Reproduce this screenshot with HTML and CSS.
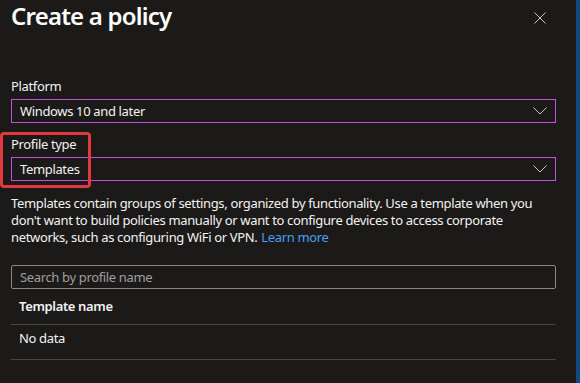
FILE: index.html
```html
<!DOCTYPE html>
<html lang="en">
<head>
    <meta charset="UTF-8">
    <meta name="viewport" content="width=device-width, initial-scale=1.0">
    <title>Create a policy</title>
    <link rel="stylesheet" href="styles.css">
</head>
<body>
    <div class="blade">
        <section class="panel">
            <header class="panel_header">
                <h2>Create a policy</h2>
                <button class="close" aria-label="Close">
                    <svg width="12" height="12" viewBox="0 0 12 12"><path d="M0.5 0.5L11.5 11.5M11.5 0.5L0.5 11.5" stroke="#c8c6c4" stroke-width="1" fill="none"/></svg>
                </button>
            </header>

            <div class="field" id="platform">
                <label>Platform</label>
                <div class="dropdown">
                    <span>Windows 10 and later</span>
                    <svg class="chevron" width="14" height="8" viewBox="0 0 14 8"><path d="M0.5 0.5L7 7L13.5 0.5" stroke="#c8c6c4" stroke-width="1" fill="none"/></svg>
                </div>
            </div>

            <div class="field" id="profile_type">
                <div class="highlight"></div>
                <label>Profile type</label>
                <div class="dropdown">
                    <span>Templates</span>
                    <svg class="chevron" width="14" height="8" viewBox="0 0 14 8"><path d="M0.5 0.5L7 7L13.5 0.5" stroke="#c8c6c4" stroke-width="1" fill="none"/></svg>
                </div>
            </div>

            <p class="description">Templates contain groups of settings, organized by functionality. Use a template when you don't want to build policies manually or want to configure devices to access corporate networks, such as configuring WiFi or VPN.<a href="#">Learn more</a></p>

            <input class="search" type="text" placeholder="Search by profile name">

            <table class="templates">
                <thead>
                    <tr><th>Template name</th></tr>
                </thead>
                <tbody>
                    <tr><td>No data</td></tr>
                </tbody>
            </table>
        </section>
        <div class="edge"></div>
    </div>
</body>
</html>
```

FILE: styles.css
```css
body {
    margin: 0;
    padding: 0;
    background-color: #1b1a19;
    color: #f3f2f1;
    font-family: "Noto Sans", "Open Sans", sans-serif;
    font-size: 13px;
    letter-spacing: -0.35px;
    line-height: 18px;
    overflow: hidden;
}
.blade {
    display: flex;
    height: 383px;
}
.panel {
    width: 545px;
    padding: 0 20px 0 11px;
}
.edge {
    width: 4px;
    background-color: #0e4a7f;
}
.panel_header {
    display: flex;
    justify-content: space-between;
    align-items: flex-start;
    margin-bottom: 45px;
}
.panel_header h2 {
    margin: 0;
    color: #fff;
    font-size: 24px;
    font-weight: 600;
    letter-spacing: -0.8px;
    line-height: 32px;
}
.close {
    background: none;
    border: none;
    padding: 0;
    margin: 12px 10px 0 0;
    width: 12px;
    height: 12px;
    display: flex;
}
.field {
    position: relative;
    margin-bottom: 12px;
}
.field label {
    display: block;
    margin-bottom: 4px;
}
.dropdown {
    display: flex;
    align-items: center;
    justify-content: space-between;
    height: 22px;
    line-height: 22px;
    border: 1px solid #c74fe0;
    padding: 0 8px 0 8px;
}
.highlight {
    position: absolute;
    left: -11px;
    top: -3px;
    width: 85px;
    height: 50px;
    border: 3px solid #e0393e;
    border-radius: 4px;
}
#profile_type {
    margin-bottom: 14px;
}
.description {
    margin: 0 0 19px;
    line-height: 17px;
}
.description a {
    color: #479ef5;
    text-decoration: none;
    margin-left: 4px;
}
.search {
    display: block;
    box-sizing: border-box;
    width: 100%;
    height: 24px;
    margin: 0;
    padding: 0 8px;
    background: transparent;
    border: 1px solid #8a8886;
    border-radius: 2px;
    color: #f3f2f1;
    font-family: inherit;
    font-size: 13px;
    letter-spacing: -0.35px;
}
.search::placeholder {
    color: #a19f9d;
}
.templates {
    width: 100%;
    border-collapse: collapse;
}
.templates th {
    text-align: left;
    font-weight: 600;
    padding: 8px 8px 9px;
    border-bottom: 1px solid #484644;
}
.templates td {
    padding: 4px 8px 12px;
    border-bottom: 1px solid #484644;
}
```
